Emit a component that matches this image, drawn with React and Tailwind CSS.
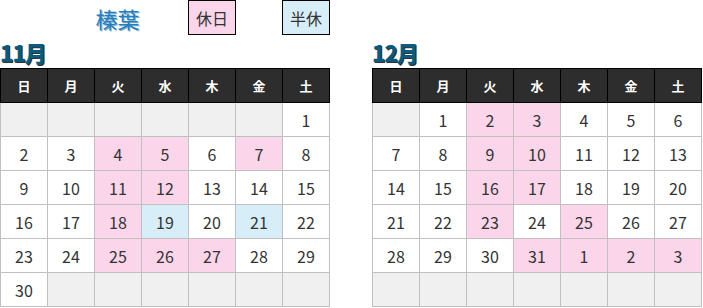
import React from "react";

const WEEK = ["日", "月", "火", "水", "木", "金", "土"];

const nov = {
  rows: [
    [null, null, null, null, null, null, 1],
    [2, 3, 4, 5, 6, 7, 8],
    [9, 10, 11, 12, 13, 14, 15],
    [16, 17, 18, 19, 20, 21, 22],
    [23, 24, 25, 26, 27, 28, 29],
    [30, null, null, null, null, null, null],
  ],
  pink: [[1, 2], [1, 3], [1, 5], [2, 2], [2, 3], [3, 2], [4, 2], [4, 3], [4, 4]],
  blue: [[3, 3], [3, 5]],
};

const dec = {
  rows: [
    [null, 1, 2, 3, 4, 5, 6],
    [7, 8, 9, 10, 11, 12, 13],
    [14, 15, 16, 17, 18, 19, 20],
    [21, 22, 23, 24, 25, 26, 27],
    [28, 29, 30, 31, 1, 2, 3],
    [null, null, null, null, null, null, null],
  ],
  pink: [[0, 2], [0, 3], [1, 2], [1, 3], [2, 2], [2, 3], [3, 2], [3, 4], [4, 3], [4, 4], [4, 5], [4, 6]],
  blue: [],
};

function has(list, r, c) {
  return list.some(([a, b]) => a === r && b === c);
}

function Calendar({ data }) {
  return (
    <div className="grid grid-cols-[48px_repeat(6,47px)]">
      {WEEK.map((w, i) => (
        <div
          key={w}
          className={
            "h-[35px] flex items-center justify-center bg-[#2d2d2d] text-white font-bold text-[13px] border-t border-r border-b border-black " +
            (i === 0 ? "border-l" : "")
          }
        >
          {w}
        </div>
      ))}
      {data.rows.map((row, r) =>
        row.map((d, c) => {
          let bg = "bg-white";
          if (d === null) bg = "bg-[#f0f0f0]";
          else if (has(data.pink, r, c)) bg = "bg-[#fbd5ea]";
          else if (has(data.blue, r, c)) bg = "bg-[#d7eef9]";
          return (
            <div
              key={r + "-" + c}
              className={
                "h-[34px] flex items-center justify-center text-[16px] text-[#333] border-r border-b border-[#c0c0c0] " +
                bg +
                (c === 0 ? " border-l" : "")
              }
            >
              {d}
            </div>
          );
        })
      )}
    </div>
  );
}

function MonthTitle({ children }) {
  return (
    <div className="h-[33px] flex items-center">
      <span className="text-[22px] font-black leading-none text-[#0c5b7e] [text-shadow:1px_1px_0_#333] tracking-[-1px]">
        {children}
      </span>
    </div>
  );
}

export default function App() {
  return (
    <div
      className="w-[703px] h-[308px] bg-white flex gap-[42px] overflow-hidden"
      style={{ fontFamily: '"Noto Sans CJK JP", "Noto Sans", sans-serif' }}
    >
      <div className="flex flex-col w-[330px]">
        <div className="h-[35px] grid grid-cols-[repeat(7,47px)]">
          <div />
          <div />
          <div className="flex items-center justify-center">
            <span className="text-[22px] font-normal leading-none text-[#2a7cc0] [text-shadow:1px_1px_0_#7fb7c9]">榛葉</span>
          </div>
          <div />
          <div className="w-[48px] h-[35px] border border-black bg-[#fbd5ea] flex items-center justify-center text-[16px] text-[#333]">
            休日
          </div>
          <div />
          <div className="w-[48px] h-[35px] border border-black bg-[#d7eef9] flex items-center justify-center text-[16px] text-[#333]">
            半休
          </div>
        </div>
        <MonthTitle>11月</MonthTitle>
        <Calendar data={nov} />
      </div>
      <div className="flex flex-col w-[330px]">
        <div className="h-[35px]" />
        <MonthTitle>12月</MonthTitle>
        <Calendar data={dec} />
      </div>
    </div>
  );
}
